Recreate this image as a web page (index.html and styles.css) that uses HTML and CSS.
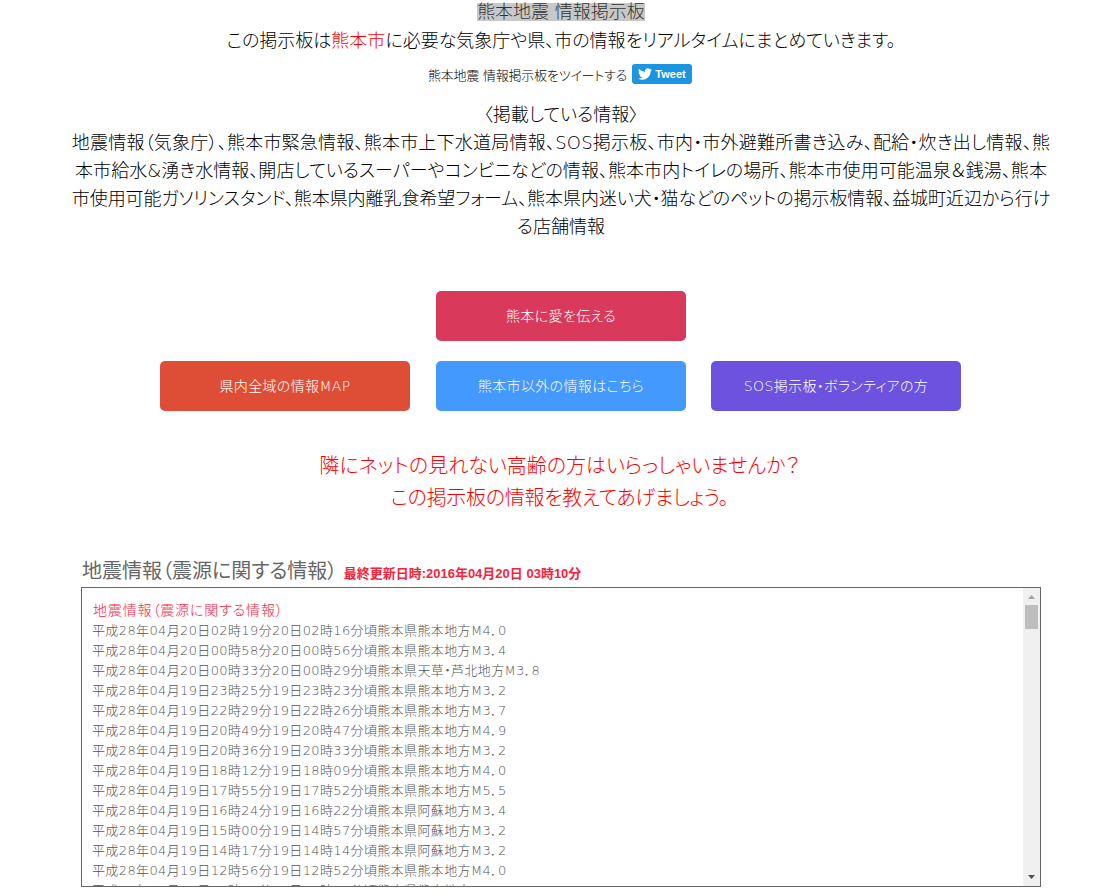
FILE: index.html
```html
<!DOCTYPE html>
<html lang="ja">
<head>
<meta charset="utf-8">
<title>熊本地震 情報掲示板</title>
<link rel="stylesheet" href="styles.css">
</head>
<body>
<div class="page">
  <header class="intro">
    <h1 class="title"><mark class="title-mark">熊本地震 情報掲示板</mark></h1>
    <p class="lead">この掲示板は<span class="red">熊本市</span>に必要な気象庁や県、市の情報をリアルタイムにまとめていきます。</p>
    <div class="tweet-row">
      <span class="tweet-label">熊本地震 情報掲示板をツイートする</span>
      <a class="tweet-btn" href="#">
        <svg class="bird" viewBox="0 0 24 24" aria-hidden="true"><path d="M23.95 4.57a10 10 0 0 1-2.82.77 4.96 4.96 0 0 0 2.16-2.72c-.95.55-2 .95-3.12 1.18a4.92 4.92 0 0 0-8.38 4.48C7.69 8.1 4.07 6.13 1.64 3.16a4.82 4.82 0 0 0-.66 2.47c0 1.7.87 3.2 2.18 4.09a4.9 4.9 0 0 1-2.23-.61v.06a4.92 4.92 0 0 0 3.95 4.83 5 5 0 0 1-2.21.08 4.94 4.94 0 0 0 4.6 3.42A9.87 9.87 0 0 1 0 19.54a14 14 0 0 0 7.56 2.21c9.05 0 14-7.5 14-13.98 0-.21 0-.42-.02-.63a9.94 9.94 0 0 0 2.46-2.55z"/></svg>
        <span>Tweet</span>
      </a>
    </div>
    <div class="listing">
      <p class="listing-head">〈掲載している情報〉</p>
      <p class="listing-body">
        <span class="ll ll-1">地震情報（気象庁）、熊本市緊急情報、熊本市上下水道局情報、SOS掲示板、市内・市外避難所書き込み、配給・炊き出し情報、熊</span>
        <span class="ll ll-2">本市給水&amp;湧き水情報、開店しているスーパーやコンビニなどの情報、熊本市内トイレの場所、熊本市使用可能温泉＆銭湯、熊本</span>
        <span class="ll ll-3">市使用可能ガソリンスタンド、熊本県内離乳食希望フォーム、熊本県内迷い犬・猫などのペットの掲示板情報、益城町近辺から行け</span>
        <span class="ll">る店舗情報</span>
      </p>
    </div>
  </header>

  <nav class="buttons">
    <div class="btn-row">
      <a class="btn btn-love" href="#">熊本に愛を伝える</a>
    </div>
    <div class="btn-row btn-row-triple">
      <a class="btn btn-map" href="#">県内全域の情報MAP</a>
      <a class="btn btn-other" href="#">熊本市以外の情報はこちら</a>
      <a class="btn btn-sos" href="#">SOS掲示板・ボランティアの方</a>
    </div>
  </nav>

  <p class="notice">隣にネットの見れない高齢の方はいらっしゃいませんか？<br><span class="notice-second">この掲示板の情報を教えてあげましょう。</span></p>

  <section class="feed">
    <h2 class="feed-title">地震情報（震源に関する情報） <span class="feed-date">最終更新日時:2016年04月20日 03時10分</span></h2>
    <div class="feed-box">
      <div class="feed-list">
        <p class="feed-head">地震情報（震源に関する情報）</p>
        <p class="line">平成28年04月20日02時19分20日02時16分頃熊本県熊本地方M4．0</p>
        <p class="line">平成28年04月20日00時58分20日00時56分頃熊本県熊本地方M3．4</p>
        <p class="line">平成28年04月20日00時33分20日00時29分頃熊本県天草・芦北地方M3．8</p>
        <p class="line">平成28年04月19日23時25分19日23時23分頃熊本県熊本地方M3．2</p>
        <p class="line">平成28年04月19日22時29分19日22時26分頃熊本県熊本地方M3．7</p>
        <p class="line">平成28年04月19日20時49分19日20時47分頃熊本県熊本地方M4．9</p>
        <p class="line">平成28年04月19日20時36分19日20時33分頃熊本県熊本地方M3．2</p>
        <p class="line">平成28年04月19日18時12分19日18時09分頃熊本県熊本地方M4．0</p>
        <p class="line">平成28年04月19日17時55分19日17時52分頃熊本県熊本地方M5．5</p>
        <p class="line">平成28年04月19日16時24分19日16時22分頃熊本県阿蘇地方M3．4</p>
        <p class="line">平成28年04月19日15時00分19日14時57分頃熊本県阿蘇地方M3．2</p>
        <p class="line">平成28年04月19日14時17分19日14時14分頃熊本県阿蘇地方M3．2</p>
        <p class="line">平成28年04月19日12時56分19日12時52分頃熊本県熊本地方M4．0</p>
        <p class="line">平成28年04月19日12時33分19日12時29分頃熊本県熊本地方M3．4</p>
      </div>
      <div class="scrollbar" aria-hidden="true">
        <svg class="arrow arrow-up" viewBox="0 0 7 4"><path d="M3.5 0L7 4H0z"/></svg>
        <div class="thumb"></div>
        <div class="track-fill"></div>
        <svg class="arrow arrow-down" viewBox="0 0 7 4"><path d="M0 0H7L3.5 4z"/></svg>
      </div>
    </div>
  </section>
</div>
</body>
</html>
```

FILE: styles.css
```css
html, body {
  margin: 0;
  padding: 0;
  background: #fff;
}
body {
  font-family: "DejaVu Sans", "Noto Sans CJK JP", sans-serif;
  font-weight: 200;
  font-feature-settings: "palt";
  color: #000;
  overflow: hidden;
}
p, h1, h2 {
  margin: 0;
  font-weight: 200;
}
.page {
  width: 980px;
  margin-left: 71px;
}
.intro {
  text-align: center;
  font-size: 18px;
}
.title {
  font-size: 18px;
  line-height: 23px;
}
.title-mark {
  background: #c8c8c8;
  color: #333;
  line-height: 18px;
  display: inline-block;
}
.lead {
  padding-top: 2px;
  line-height: 31px;
}
.red {
  color: #f00;
}
.tweet-row {
  display: flex;
  justify-content: center;
  align-items: flex-start;
  height: 38px;
  margin-top: 7px;
  padding-right: 2px;
  gap: 5px;
}
.tweet-label {
  font-size: 13px;
  line-height: 16px;
  margin-top: 5px;
  letter-spacing: -0.22px;
}
.tweet-btn {
  display: flex;
  align-items: center;
  justify-content: center;
  gap: 3px;
  width: 60px;
  height: 20px;
  margin-top: 1px;
  border-radius: 3px;
  background: #1b95e0;
  color: #fff;
  font: bold 11px "Liberation Sans", sans-serif;
  text-decoration: none;
}
.bird {
  width: 14px;
  height: 14px;
  fill: #fff;
}
.listing {
  line-height: 28px;
}
.ll {
  display: block;
  white-space: nowrap;
}
.ll-1 { letter-spacing: 0.22px; }
.ll-2 { letter-spacing: 0.05px; }
.ll-3 { letter-spacing: -0.06px; }
.buttons {
  margin-top: 50px;
  display: flex;
  flex-direction: column;
  gap: 20px;
}
.btn-row {
  display: flex;
  justify-content: center;
}
.btn-row-triple {
  padding-right: 1px;
}
.btn {
  box-sizing: border-box;
  display: flex;
  align-items: center;
  justify-content: center;
  width: 250px;
  height: 50px;
  padding-bottom: 3px;
  border-radius: 5px;
  color: #fff;
  font-size: 14px;
  letter-spacing: 0.35px;
  text-decoration: none;
}
.btn-love { background: #d93a5c; }
.btn-map { background: #de4e37; }
.btn-other { background: #4499ff; margin: 0 25px 0 26px; }
.btn-sos { background: #6d52e0; }
.notice {
  margin-top: 39px;
  padding-right: 3px;
  text-align: center;
  color: #f00;
  font-size: 20px;
  line-height: 32px;
}
.notice-second {
  letter-spacing: -0.3px;
}
.feed {
  margin: 41px 10px 0;
}
.feed-title {
  padding: 4px 0 0 1px;
  font-size: 20px;
  line-height: 24px;
  color: #666;
  font-weight: 400;
}
.feed-date {
  font-family: "Liberation Sans", "Noto Sans CJK JP", sans-serif;
  font-size: 13px;
  font-weight: 700;
  color: #f7223b;
}
.feed-box {
  position: relative;
  box-sizing: border-box;
  height: 300px;
  margin-top: 1px;
  padding: 11px 17px 0 10px;
  border: 1px solid #666;
  overflow: hidden;
  color: #555;
  font-size: 13px;
  line-height: 20px;
}
.feed-head {
  color: #f7223b;
  font-size: 14px;
  line-height: 22px;
  padding-left: 1px;
  letter-spacing: 0.85px;
}
.line {
  letter-spacing: 0.37px;
}
.scrollbar {
  position: absolute;
  top: 0;
  right: 0;
  bottom: 0;
  width: 17px;
  display: flex;
  flex-direction: column;
  align-items: center;
  background: #f0f0f0;
}
.arrow {
  flex: none;
  width: 7px;
  height: 4px;
}
.arrow-up {
  margin: 7px 0 6px;
  fill: #a3a3a3;
}
.arrow-down {
  margin-bottom: 7px;
  fill: #505050;
}
.thumb {
  flex: none;
  width: 13px;
  height: 24px;
  background: #bebebe;
}
.track-fill {
  flex: 1;
}
```
